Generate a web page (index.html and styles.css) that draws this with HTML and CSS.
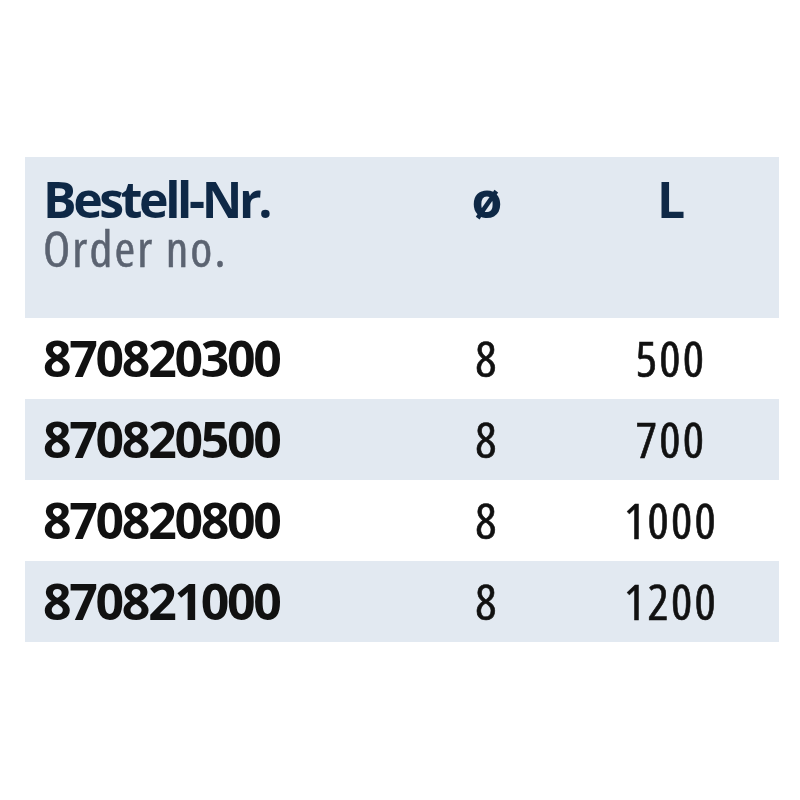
FILE: index.html
```html
<!DOCTYPE html>
<html lang="de">
<head>
<meta charset="utf-8">
<link rel="stylesheet" href="styles.css">
</head>
<body>
<div class="table">
  <div class="row head">
    <div class="cell first">
      <div class="de">Bestell-Nr.</div>
      <div class="en">Order no.</div>
    </div>
    <div class="cell center"><div class="de sym">ø</div></div>
    <div class="cell center"><div class="de sym">L</div></div>
    <div class="cell"></div>
  </div>
  <div class="row">
    <div class="cell first num">870820300</div>
    <div class="cell center">8</div>
    <div class="cell center">500</div>
    <div class="cell"></div>
  </div>
  <div class="row alt">
    <div class="cell first num">870820500</div>
    <div class="cell center">8</div>
    <div class="cell center">700</div>
    <div class="cell"></div>
  </div>
  <div class="row">
    <div class="cell first num">870820800</div>
    <div class="cell center">8</div>
    <div class="cell center">1000</div>
    <div class="cell"></div>
  </div>
  <div class="row alt">
    <div class="cell first num">870821000</div>
    <div class="cell center">8</div>
    <div class="cell center">1200</div>
    <div class="cell"></div>
  </div>
</div>
</body>
</html>
```
FILE: styles.css
```css
html, body {
  margin: 0;
  background: #ffffff;
}
body {
  font-family: "Open Sans", "Noto Sans", sans-serif;
  color: #111111;
}
.table {
  margin: 157px 0 0 25px;
  width: 754px;
}
.row {
  display: grid;
  grid-template-columns: 375px 174px 194px 1fr;
  height: 81px;
  font-size: 50px;
  line-height: 81px;
}
.row.alt {
  background: #e2e9f1;
}
.row.head {
  background: #e2e9f1;
  height: 161px;
  line-height: 47px;
  padding-top: 19px;
  box-sizing: border-box;
}
.cell.first {
  padding-left: 18px;
}
.cell.center {
  text-align: center;
  font-stretch: condensed;
  letter-spacing: 2.2px;
  -webkit-text-stroke: 0.6px #111111;
}
.de {
  font-weight: 700;
  color: #0e2846;
  letter-spacing: -3.4px;
  -webkit-text-stroke: 0;
}
.de.sym {
  font-stretch: normal;
  letter-spacing: 0;
}
.en {
  margin-top: 2px;
  color: #5b6371;
  font-stretch: condensed;
  letter-spacing: 2.1px;
  -webkit-text-stroke: 0.5px #5b6371;
}
.num {
  font-weight: 700;
  letter-spacing: -2.3px;
}
```
